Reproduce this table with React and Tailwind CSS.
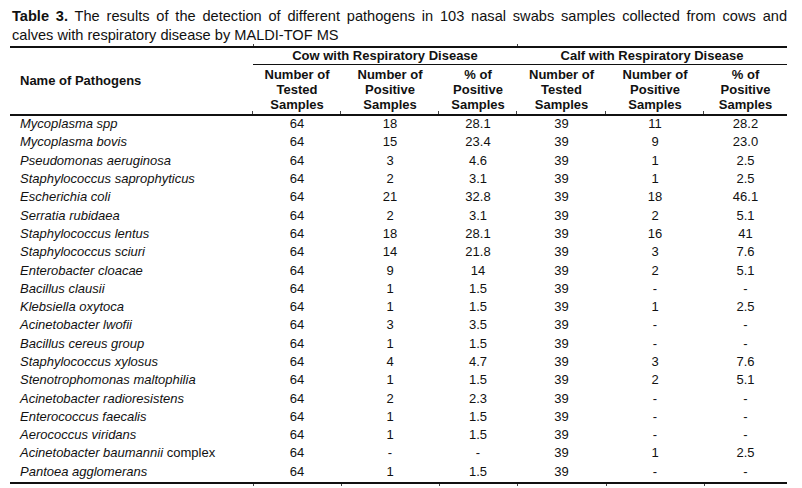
import React from 'react';

const cols = ['w-[88px]', 'w-[98px]', 'w-[78px]', 'w-[89px]', 'w-[98px]', 'w-[83px]'];

const subHeads = [
  ['Number of', 'Tested', 'Samples'],
  ['Number of', 'Positive', 'Samples'],
  ['% of', 'Positive', 'Samples'],
  ['Number of', 'Tested', 'Samples'],
  ['Number of', 'Positive', 'Samples'],
  ['% of', 'Positive', 'Samples'],
];

const rows = [
  ['Mycoplasma spp', null, '64', '18', '28.1', '39', '11', '28.2'],
  ['Mycoplasma bovis', null, '64', '15', '23.4', '39', '9', '23.0'],
  ['Pseudomonas aeruginosa', null, '64', '3', '4.6', '39', '1', '2.5'],
  ['Staphylococcus saprophyticus', null, '64', '2', '3.1', '39', '1', '2.5'],
  ['Escherichia coli', null, '64', '21', '32.8', '39', '18', '46.1'],
  ['Serratia rubidaea', null, '64', '2', '3.1', '39', '2', '5.1'],
  ['Staphylococcus lentus', null, '64', '18', '28.1', '39', '16', '41'],
  ['Staphylococcus sciuri', null, '64', '14', '21.8', '39', '3', '7.6'],
  ['Enterobacter cloacae', null, '64', '9', '14', '39', '2', '5.1'],
  ['Bacillus clausii', null, '64', '1', '1.5', '39', '-', '-'],
  ['Klebsiella oxytoca', null, '64', '1', '1.5', '39', '1', '2.5'],
  ['Acinetobacter lwofii', null, '64', '3', '3.5', '39', '-', '-'],
  ['Bacillus cereus group', null, '64', '1', '1.5', '39', '-', '-'],
  ['Staphylococcus xylosus', null, '64', '4', '4.7', '39', '3', '7.6'],
  ['Stenotrophomonas maltophilia', null, '64', '1', '1.5', '39', '2', '5.1'],
  ['Acinetobacter radioresistens', null, '64', '2', '2.3', '39', '-', '-'],
  ['Enterococcus faecalis', null, '64', '1', '1.5', '39', '-', '-'],
  ['Aerococcus viridans', null, '64', '1', '1.5', '39', '-', '-'],
  ['Acinetobacter baumannii', 'complex', '64', '-', '-', '39', '1', '2.5'],
  ['Pantoea agglomerans', null, '64', '1', '1.5', '39', '-', '-'],
];

const Tick = () => <span className="absolute left-[-1px] bottom-0 h-[3px] border-l border-[#444]" />;

export default function App() {
  return (
    <div className="w-[802px] h-[488px] bg-white text-[#111] font-['Liberation_Sans',Arial,sans-serif] overflow-hidden">
      <div className="ml-[12px] mr-[15px] pt-[7px] text-[14.6px] leading-[18.5px]">
        <p className="text-justify [text-align-last:justify] whitespace-nowrap">
          <b>Table 3.</b> The results of the detection of different pathogens in 103 nasal swabs samples collected from cows and
        </p>
        <p>calves with respiratory disease by MALDI-TOF MS</p>
      </div>

      <div className="ml-[10px] w-[777px] text-[13px]">
        {/* ticks above top rule */}
        <div className="flex h-[2px]">
          <div className="w-[243px]" />
          <div className="w-[264px] border-l border-[#444]" />
          <div className="flex-1 border-l border-[#444]" />
        </div>

        <div className="flex border-t-2 border-[#111] font-bold">
          <div className="w-[243px] flex items-center pl-[10px]">Name of Pathogens</div>
          <div className="flex-1">
            <div className="flex h-[17px] items-center border-b border-[#111]">
              <div className="w-[264px] text-center">Cow with Respiratory Disease</div>
              <div className="flex-1 text-center">Calf with Respiratory Disease</div>
            </div>
            <div className="flex h-[49px] items-center">
              {subHeads.map((lines, i) => (
                <div key={i} className={`${cols[i]} relative h-full flex flex-col justify-center text-center leading-[15px]`}>
                  {lines.map((l) => (
                    <span key={l}>{l}</span>
                  ))}
                  <Tick />
                </div>
              ))}
            </div>
          </div>
        </div>

        <div className="border-t-2 border-[#111]">
          {rows.map(([name, extra, ...vals]) => (
            <div key={name} className="flex h-[18.3px] items-center leading-[18px] -translate-y-[1px]">
              <div className="w-[243px] pl-[10px] whitespace-nowrap">
                <i>{name}</i>
                {extra && <span> {extra}</span>}
              </div>
              {vals.map((v, i) => (
                <div key={i} className={`${cols[i]} text-center`}>{v}</div>
              ))}
            </div>
          ))}
        </div>

        {/* bottom rule with ticks below */}
        <div className="flex h-[4px] border-t-2 border-[#111]">
          <div className="w-[243px]" />
          {cols.map((c, i) => (
            <div key={i} className={`${c} border-l border-[#444]`} />
          ))}
        </div>
      </div>
    </div>
  );
}
